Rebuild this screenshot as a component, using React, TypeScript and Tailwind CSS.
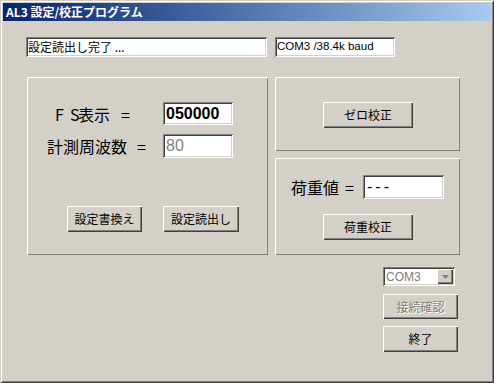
const ja = "font-['Noto_Sans_CJK_JP',sans-serif]";
const lat = "font-['Liberation_Sans','Noto_Sans_CJK_JP',sans-serif]";
const sunken =
  "shadow-[inset_1px_1px_#808080,inset_-1px_-1px_#ffffff,inset_2px_2px_#404040,inset_-2px_-2px_#d4d0c8]";
const raised =
  "shadow-[inset_1px_1px_#ffffff,inset_-1px_-1px_#404040,inset_-2px_-2px_#808080]";
const panel = "shadow-[inset_1px_1px_#ffffff,inset_-1px_-1px_#808080]";

function Btn({
  label,
  w,
  h,
  disabled,
  className = "",
}: {
  label: string;
  w: string;
  h: string;
  disabled?: boolean;
  className?: string;
}) {
  return (
    <div
      className={`${w} ${h} ${raised} bg-[#d4d0c8] flex items-center justify-center ${ja} text-[12px] leading-none ${
        disabled ? "text-[#808080] [text-shadow:1px_1px_#ffffff]" : "text-black"
      } ${className}`}
    >
      {label}
    </div>
  );
}

export default function App() {
  return (
    <div className="w-[494px] h-[383px] bg-[#d4d0c8] p-[3px] flex flex-col shadow-[inset_1px_1px_#d4d0c8,inset_-1px_-1px_#404040,inset_2px_2px_#ffffff,inset_-2px_-2px_#808080]">
      <div
        className={`h-[18px] flex items-center pl-[3px] bg-linear-to-r from-[#0a246a] to-[#a6caf0] text-white font-bold text-[12px] leading-none ${ja}`}
      >
        AL3 設定/校正プログラム
      </div>
      <div className="flex flex-col pl-[23px] pt-[16px]">
        {/* row 1 */}
        <div className="flex">
          <div
            className={`w-[241px] h-[20px] bg-white ${sunken} flex items-center pl-[2px] ${ja} text-[12px] leading-none text-black`}
          >
            設定読出し完了 ...
          </div>
          <div
            className={`ml-[8px] w-[120px] h-[20px] bg-white ${sunken} flex items-center pl-[2px] ${lat} text-[11.5px] leading-none text-black`}
          >
            COM3 /38.4k baud
          </div>
        </div>

        {/* row 2 */}
        <div className="flex mt-[20px] ml-[1px]">
          <div className={`w-[241px] h-[178px] ${panel} flex flex-col pt-[25px]`}>
            <div className="flex items-center h-[23px]">
              <div className={`w-[136px] flex items-center pl-[28px] ${ja} text-[16px] leading-none text-black`}>
                <span className="w-[15px]">F</span>
                <span className="w-[8px]">S</span>
                <span>表示</span>
                <span className="ml-[11px]">=</span>
              </div>
              <div
                className={`w-[70px] h-[23px] bg-white ${sunken} flex items-center pl-[3px] ${lat} font-bold text-[16px] leading-none text-black`}
              >
                050000
              </div>
            </div>
            <div className="flex items-center h-[24px] mt-[9px]">
              <div className={`w-[136px] flex items-center pl-[20px] ${ja} text-[16px] leading-none text-black`}>
                <span>計測周波数</span>
                <span className="ml-[10px]">=</span>
              </div>
              <div
                className={`w-[70px] h-[24px] bg-white ${sunken} flex items-center pl-[3px] ${lat} text-[16px] leading-none text-[#808080]`}
              >
                80
              </div>
            </div>
            <div className="flex mt-[48px] pl-[40px]">
              <Btn label="設定書換え" w="w-[75px]" h="h-[26px]" />
              <Btn label="設定読出し" w="w-[76px]" h="h-[26px]" className="ml-[21px]" />
            </div>
          </div>

          <div className="ml-[7px] w-[185px] flex flex-col">
            <div className={`h-[74px] ${panel} flex pt-[25px] pl-[48px]`}>
              <Btn label="ゼロ校正" w="w-[90px]" h="h-[26px]" />
            </div>
            <div className={`mt-[7px] h-[97px] ${panel} flex flex-col pt-[17px]`}>
              <div className="flex items-center h-[24px]">
                <div className={`w-[88px] flex items-center pl-[16px] ${ja} text-[16px] leading-none text-black`}>
                  <span>荷重値</span>
                  <span className="ml-[6px]">=</span>
                </div>
                <div
                  className={`w-[81px] h-[24px] bg-white ${sunken} flex items-center pl-[4px] ${lat} text-[16px] tracking-[3px] leading-none text-black`}
                >
                  ---
                </div>
              </div>
              <div className="flex mt-[15px] pl-[48px]">
                <Btn label="荷重校正" w="w-[90px]" h="h-[26px]" />
              </div>
            </div>
          </div>
        </div>

        {/* row 3 */}
        <div className="flex flex-col mt-[12px] pl-[357px]">
          <div className={`w-[72px] h-[19px] bg-white ${sunken} flex items-center p-[2px]`}>
            <div className={`flex-1 pl-[1px] ${lat} text-[12px] leading-none text-[#808080]`}>COM3</div>
            <div className={`w-[16px] h-[15px] bg-[#d4d0c8] ${raised} flex items-center justify-center`}>
              <svg width="7" height="4" viewBox="0 0 7 4">
                <path d="M0 0h7L3.5 4z" fill="#808080" />
              </svg>
            </div>
          </div>
          <Btn label="接続確認" w="w-[75px]" h="h-[25px]" disabled className="mt-[8px]" />
          <Btn label="終了" w="w-[75px]" h="h-[26px]" className="mt-[7px]" />
        </div>
      </div>
    </div>
  );
}
